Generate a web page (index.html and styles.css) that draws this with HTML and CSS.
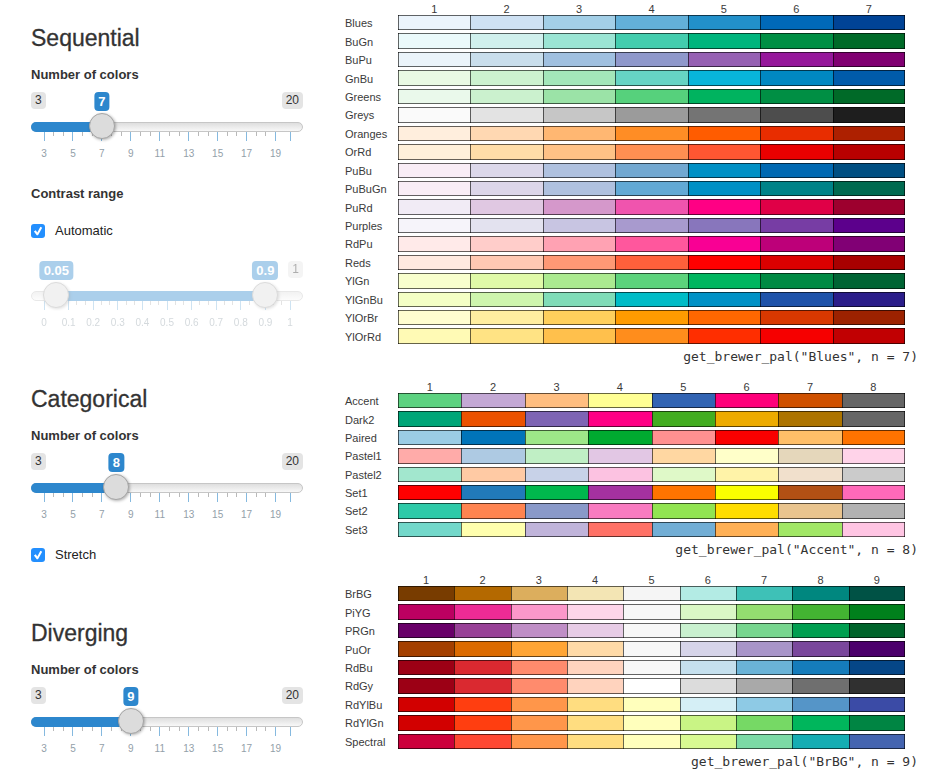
FILE: index.html
```html
<!DOCTYPE html>
<html lang="en">
<head>
<meta charset="utf-8">
<title>Palette explorer</title>
<link rel="stylesheet" href="styles.css">
</head>
<body>
<main class="page">
  <div class="controls">
    <section>
      <h3>Sequential</h3>
      <label class="title" for="seq-n">Number of colors</label>
      <div class="slider" data-min="3" data-max="20" data-step="2">
        <div class="limits"><span>3</span><span>20</span></div>
        <div class="bars"><input type="range" id="seq-n" min="3" max="20" value="7"></div>
      </div>
      <h4 class="title">Contrast range</h4>
      <label class="check"><input type="checkbox" checked><span>Automatic</span></label>
      <div class="slider disabled" data-min="0" data-max="1" data-step="0.1">
        <div class="limits"><span class="hidden">0</span><span>1</span></div>
        <div class="bars">
          <input type="range" aria-label="Contrast from" min="0" max="1" step="0.01" value="0.05" disabled>
          <input type="range" aria-label="Contrast to" min="0" max="1" step="0.01" value="0.9" disabled>
        </div>
      </div>
    </section>
    <section>
      <h3>Categorical</h3>
      <label class="title" for="cat-n">Number of colors</label>
      <div class="slider" data-min="3" data-max="20" data-step="2">
        <div class="limits"><span>3</span><span>20</span></div>
        <div class="bars"><input type="range" id="cat-n" min="3" max="20" value="8"></div>
      </div>
      <label class="check"><input type="checkbox" checked><span>Stretch</span></label>
    </section>
    <section>
      <h3>Diverging</h3>
      <label class="title" for="div-n">Number of colors</label>
      <div class="slider" data-min="3" data-max="20" data-step="2">
        <div class="limits"><span>3</span><span>20</span></div>
        <div class="bars"><input type="range" id="div-n" min="3" max="20" value="9"></div>
      </div>
    </section>
  </div>
  <div class="plots">
    <section>
      <table class="palette sequential" data-palette="sequential"></table>
      <code>get_brewer_pal("Blues", n = 7)</code>
    </section>
    <section>
      <table class="palette categorical" data-palette="categorical"></table>
      <code>get_brewer_pal("Accent", n = 8)</code>
    </section>
    <section>
      <table class="palette diverging" data-palette="diverging"></table>
      <code>get_brewer_pal("BrBG", n = 9)</code>
    </section>
  </div>
</main>
<script src="script.js"></script>
</body>
</html>
```
FILE: styles.css
```css
* { box-sizing: border-box; }

body {
  margin: 0;
  background: #fff;
  color: #333;
  font: 13px/18px "Liberation Sans", Arial, sans-serif;
}

.page {
  display: grid;
  grid-template-columns: 272fr 573fr;
  column-gap: 42px;
  padding: 0 11px 0 31px;
}

.controls {
  display: flex;
  flex-direction: column;
  gap: 56px;
  padding-top: 25px;
}

h3 {
  margin: 0 0 15px;
  font-size: 23px;
  line-height: 26px;
  font-weight: 500;
  -webkit-text-stroke: 0.3px #333;
}

.title {
  display: block;
  margin: 0;
  font-size: 13px;
  line-height: 18px;
  font-weight: 700;
}

.slider {
  position: relative;
  height: 69px;
  margin-top: 8px;
}

.slider + .title,
.slider + .check { margin-top: 24px; }

.slider.disabled { opacity: 0.4; margin-top: 21px; }

.limits {
  display: flex;
  justify-content: space-between;
  margin-bottom: 13px;
  font-size: 12px;
  line-height: 17px;
}

.limits span {
  padding: 0 4px;
  border-radius: 4px;
  background: #e4e4e4;
}

.limits .hidden { visibility: hidden; }

.bubble {
  position: absolute;
  top: 0;
  left: calc(13px + (100% - 26px) * var(--at));
  transform: translateX(-50%);
  padding: 0 4px;
  border-radius: 4px;
  background: #2d87cd;
  color: #fff;
  font-weight: 700;
  line-height: 19px;
}

.bars {
  position: relative;
  z-index: 1;
  display: grid;
  height: 10px;
  border-radius: 5px;
  border: 1px solid #c6c6c6;
  background: linear-gradient(#dedede, #f8f8f8);
}

.bars::before {
  content: "";
  grid-area: 1 / 1;
  height: 10px;
  margin-top: -1px;
  margin-left: calc(var(--start) - 1px);
  width: calc(var(--end) - var(--start));
  border-radius: var(--round) 0 0 var(--round);
  background: #2d87cd;
}

.bars input {
  grid-area: 1 / 1;
  appearance: none;
  width: calc(100% + 2px);
  height: 10px;
  margin: -1px;
  background: transparent;
  pointer-events: none;
}

.bars input::-webkit-slider-runnable-track { height: 10px; }

.bars input::-webkit-slider-thumb {
  appearance: none;
  width: 26px;
  height: 26px;
  margin-top: -9px;
  border: 1px solid #a5a5a5;
  border-radius: 50%;
  background: #dcdcdc;
  box-shadow: 1px 1px 3px rgba(0, 0, 0, 0.3);
  pointer-events: auto;
}

.scale { display: block; padding: 0 13px; }
.scale svg { display: block; width: 100%; height: 28px; overflow: visible; }
.scale line { stroke: #b9b9b9; stroke-width: 1; shape-rendering: crispEdges; }
.scale .major { stroke: #85b9df; }
.scale text { fill: #93a0a9; font-size: 10px; text-anchor: middle; }

.check {
  display: flex;
  align-items: center;
  gap: 10px;
  color: #222;
}

.title + .check { margin-top: 19px; }

.check input {
  appearance: none;
  width: 14px;
  height: 14px;
  margin: 0;
  border-radius: 3px;
  background: #238ffe;
}

.check input:checked::before {
  content: "";
  display: block;
  width: 14px;
  height: 14px;
  background: #fff;
  clip-path: polygon(21% 54%, 34% 45%, 45% 60%, 67% 19%, 80% 27%, 50% 80%, 41% 80%);
}

.plots {
  display: flex;
  flex-direction: column;
  gap: 14px;
  padding-top: 3px;
}

.palette {
  table-layout: fixed;
  width: calc(100% - 13px);
  border-collapse: separate;
  border-spacing: 0;
  font-size: 11px;
  line-height: 12px;
}

.sequential { height: 344px; }
.categorical { height: 159px; }
.diverging { height: 178px; }

.palette th {
  padding: 0;
  font-weight: 400;
  color: #3a3a3a;
}

.palette thead th { height: 12px; }
.palette .corner { width: 53px; }
.palette tbody th { text-align: left; padding-bottom: 2px; }

.palette td {
  padding: 0;
  border-bottom: 3px solid transparent;
  background-clip: padding-box;
  box-shadow:
    inset 1px 0 rgba(0, 0, 0, 0.6),
    inset 0 1px rgba(0, 0, 0, 0.6),
    inset 0 -1px rgba(0, 0, 0, 0.6);
}

.palette td:last-child {
  box-shadow:
    inset 1px 0 rgba(0, 0, 0, 0.6),
    inset -1px 0 rgba(0, 0, 0, 0.6),
    inset 0 1px rgba(0, 0, 0, 0.6),
    inset 0 -1px rgba(0, 0, 0, 0.6);
}

code {
  display: block;
  text-align: right;
  font: 13px/20px "DejaVu Sans Mono", monospace;
}
```
FILE: script.js
```js
const palettes = {
  sequential: {
    Blues: "ebf4fc cee1f3 a3cfe7 63b0d9 2290ca 0069b8 004396",
    BuGn: "ebfafb d0f0ed 9be5d4 43cdae 00b57d 008f44 006a28",
    BuPu: "ebf4fa c9deec a0c0e0 8f98cb 9660b3 96179b 810072",
    GnBu: "e9fae3 ccf2cf a3e7ba 66d4c4 08b5da 0088c2 005baa",
    Greens: "eaf9eb cbf1ce 9be3a7 56d17c 00b35f 008f44 006a28",
    Greys: "fafafa e3e3e3 c6c6c6 9b9b9b 747474 4d4d4d 1e1e1e",
    Oranges: "ffeedd ffd8b2 ffb772 ff8d25 ff5c00 e82d00 ad2000",
    OrRd: "fff0da ffdda8 ffc286 ff8f52 ff5632 e90000 b80000",
    PuBu: "f9edf6 dcd8ea afc1df 72a8d1 0090c5 0069b2 004f82",
    PuBuGn: "f9edf6 dcd6e9 afc1df 62a9d5 0090c5 008388 006a50",
    PuRd: "f1ebf5 e0c8e2 d598cb f054ae ff0084 e00047 9d002e",
    Purples: "f6f4fa e3e2ef c8c5e2 a89ace 8876bc 773da4 5c008c",
    RdPu: "ffeae9 ffcdca ffa2b3 ff579d f90094 bd0079 810075",
    Reds: "ffe9e0 ffc8b3 ff9875 ff603b ff0000 db0000 a80000",
    YlGn: "f8ffcd e0faa8 abea90 5cd37c 00b65f 008a43 006434",
    YlGnBu: "f4ffc5 cef5ae 80dcb8 00bcc7 0091c6 1e53aa 2b1d8a",
    YlOrBr: "fffdd0 ffeea0 ffd05c ff9b00 ff6700 d83800 9c2200",
    YlOrRd: "fffab5 ffe384 ffc04c ff8d1c ff2e00 f60000 c10002"
  },
  categorical: {
    Accent: "5cd280 c3a8d5 ffbe80 ffff94 3264b3 ff007a cf5100 666666",
    Dark2: "00a678 ec5200 7e64b4 ff0085 42ad20 edab00 ad7400 666666",
    Paired: "9bcce5 0074b9 9de788 00aa30 ff9090 fa0000 ffbf68 ff7300",
    Pastel1: "ffaba9 aecae3 c0efc5 e2c7e4 ffd7a2 ffffc9 e5d7bb ffd3e9",
    Pastel2: "a2e7ce ffcaa4 c8d2e8 fcc2e1 dff9c8 fff3a8 f1e0cc cbcbcb",
    Set1: "ff0000 217ab9 00b84d a431a0 ff7400 fbff00 b25014 ff69b9",
    Set2: "2dcaa8 ff8450 8999c9 f97bc0 91e451 ffdd00 e9c48e b2b2b2",
    Set3: "73d8ca ffffae c0b4da ff7166 72aed5 ffb055 a1e765 ffc5e3"
  },
  diverging: {
    BrBG: "783c00 b46900 dcae5d f3e5b4 f5f5f5 b3ebe4 3ec1b7 00877f 005245",
    PiYG: "bc0061 ed2b95 fb97ca fdd5e9 f7f7f7 daf7c5 93de70 43b432 00801c",
    PRGn: "690069 984197 bf8ec6 e7cce6 f7f7f7 c9f1cf 77d68f 009f50 00642b",
    PuOr: "a44000 dc6b00 ffa535 ffdaa7 f7f7f7 d6d4e9 a895c9 7a479c 4c006c",
    RdBu: "9c0015 da2930 ff8b6d ffd3be f7f7f7 c5e0ee 6ab3d7 157cbb 054687",
    RdGy: "9c0015 da2930 ff8b6d ffd3be ffffff dcdcdc a9a9a9 6f6f6f 303030",
    RdYlBu: "d20000 ff3e10 ff964a ffdd80 ffffbc d5eff6 8ecae5 5595c8 3b4ba6",
    RdYlGn: "d20000 ff3e10 ff964a ffdd80 ffffbc c9f485 76d965 00b65c 008543",
    Spectral: "cc003c ff4833 ff964a ffdd80 ffffbc d8fa92 7bdaa5 15adb3 4464b0"
  }
};

function fillTable(table) {
  const rows = Object.entries(palettes[table.dataset.palette]);
  const count = rows[0][1].split(" ").length;
  const heads = Array.from({ length: count }, (_, i) => `<th scope="col">${i + 1}</th>`).join("");
  const body = rows.map(([name, colors]) => {
    const cells = colors.split(" ").map(c => `<td style="background-color:#${c}"></td>`).join("");
    return `<tr><th scope="row">${name}</th>${cells}</tr>`;
  }).join("");
  table.innerHTML = `<thead><tr><th class="corner"></th>${heads}</tr></thead><tbody>${body}</tbody>`;
}

function drawSlider(slider) {
  const min = Number(slider.dataset.min);
  const max = Number(slider.dataset.max);
  const step = Number(slider.dataset.step);
  const bars = slider.querySelector(".bars");
  const inputs = [...slider.querySelectorAll("input")];
  const ratio = v => (v - min) / (max - min);

  const bubbles = inputs.map(input => {
    const bubble = document.createElement("output");
    bubble.className = "bubble";
    slider.append(bubble);
    return bubble;
  });

  function update() {
    inputs.forEach((input, i) => {
      bubbles[i].textContent = input.value;
      bubbles[i].style.setProperty("--at", ratio(input.value));
    });
    const point = v => `calc(13px + (100% - 24px) * ${ratio(v)})`;
    const isRange = inputs.length > 1;
    bars.style.setProperty("--start", isRange ? point(inputs[0].value) : "0px");
    bars.style.setProperty("--end", point(inputs[inputs.length - 1].value));
    bars.style.setProperty("--round", isRange ? "0px" : "5px");
  }
  inputs.forEach(input => input.addEventListener("input", update));
  update();

  let marks = "";
  const line = (r, kind, h) => `<line class="${kind}" x1="${r * 100}%" x2="${r * 100}%" y1="0" y2="${h}"/>`;
  const count = Math.floor((max - min) / step + 0.001);
  for (let i = 0; i <= count; i++) {
    const value = Number((min + i * step).toFixed(1));
    marks += line(ratio(value), "major", 9);
    marks += `<text x="${ratio(value) * 100}%" y="25">${value}</text>`;
    if (i < count) {
      marks += line(ratio(value + step / 3), "minor", 4);
      marks += line(ratio(value + step * 2 / 3), "minor", 4);
    }
  }
  if (min + count * step < max - 0.01) marks += line(1, "major", 9);
  const scale = document.createElement("div");
  scale.className = "scale";
  scale.innerHTML = `<svg aria-hidden="true">${marks}</svg>`;
  bars.after(scale);
}

document.querySelectorAll(".palette").forEach(fillTable);
document.querySelectorAll(".slider").forEach(drawSlider);
```
